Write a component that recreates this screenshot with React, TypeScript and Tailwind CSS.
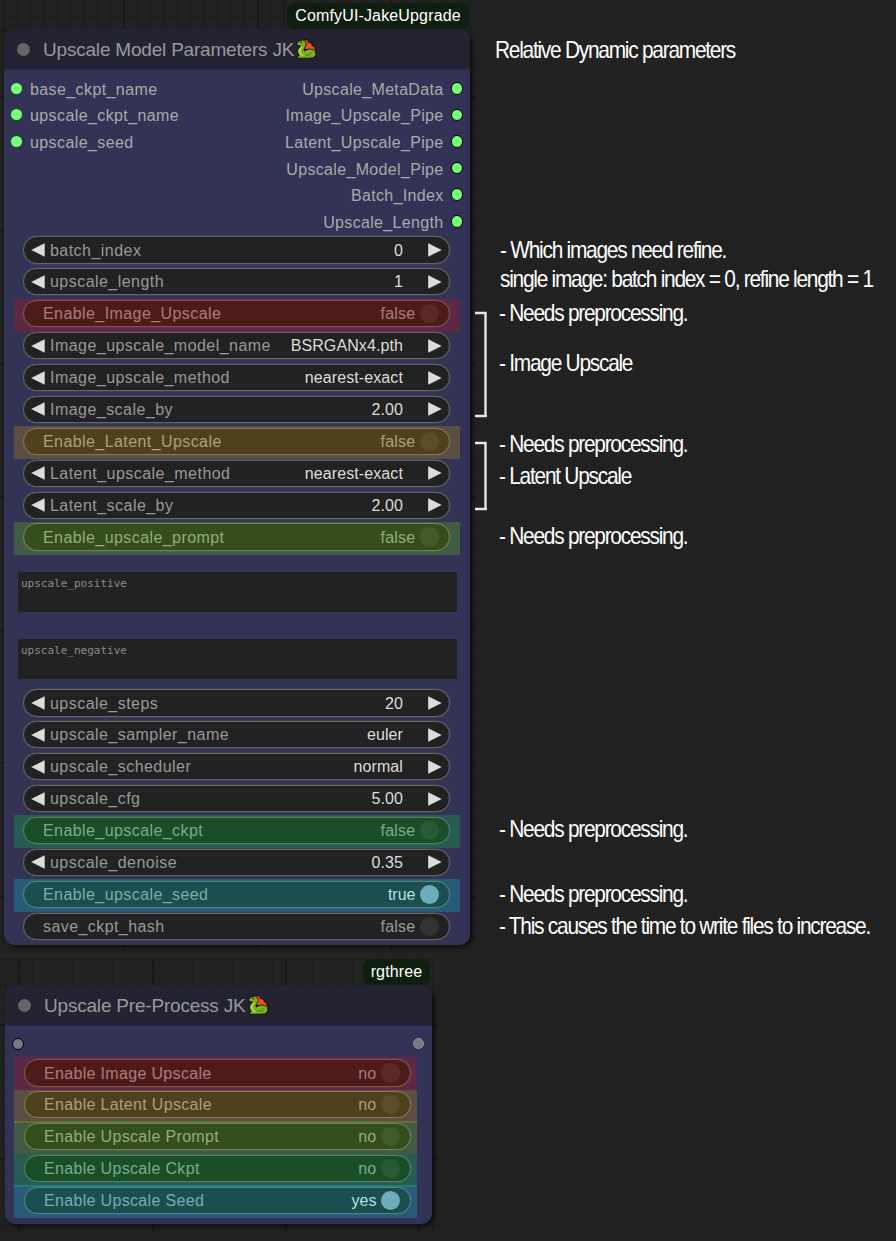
import React from "react";

type Tint = "red" | "amber" | "lime" | "green" | "cyan";

const TINTS: Record<Tint, string> = {
  red: "bg-[#ff0000]/20",
  amber: "bg-[#ffc000]/20",
  lime: "bg-[#80ff00]/20",
  green: "bg-[#00ff40]/20",
  cyan: "bg-[#00ffff]/20",
};

interface Widget {
  label: string;
  value: string;
  kind: "stepper" | "toggle";
  tint?: Tint;
  on?: boolean;
}

const TOP: Widget[] = [
  { label: "batch_index", value: "0", kind: "stepper" },
  { label: "upscale_length", value: "1", kind: "stepper" },
  { label: "Enable_Image_Upscale", value: "false", kind: "toggle", tint: "red" },
  { label: "Image_upscale_model_name", value: "BSRGANx4.pth", kind: "stepper" },
  { label: "Image_upscale_method", value: "nearest-exact", kind: "stepper" },
  { label: "Image_scale_by", value: "2.00", kind: "stepper" },
  { label: "Enable_Latent_Upscale", value: "false", kind: "toggle", tint: "amber" },
  { label: "Latent_upscale_method", value: "nearest-exact", kind: "stepper" },
  { label: "Latent_scale_by", value: "2.00", kind: "stepper" },
  { label: "Enable_upscale_prompt", value: "false", kind: "toggle", tint: "lime" },
];

const BOTTOM: Widget[] = [
  { label: "upscale_steps", value: "20", kind: "stepper" },
  { label: "upscale_sampler_name", value: "euler", kind: "stepper" },
  { label: "upscale_scheduler", value: "normal", kind: "stepper" },
  { label: "upscale_cfg", value: "5.00", kind: "stepper" },
  { label: "Enable_upscale_ckpt", value: "false", kind: "toggle", tint: "green" },
  { label: "upscale_denoise", value: "0.35", kind: "stepper" },
  { label: "Enable_upscale_seed", value: "true", kind: "toggle", tint: "cyan", on: true },
  { label: "save_ckpt_hash", value: "false", kind: "toggle" },
];

const PRE: (Widget & { band: string })[] = [
  { label: "Enable Image Upscale", value: "no", kind: "toggle", tint: "red", band: "top-[-2px] h-[33px]" },
  { label: "Enable Latent Upscale", value: "no", kind: "toggle", tint: "amber", band: "top-[-1px] h-[33px]" },
  { label: "Enable Upscale Prompt", value: "no", kind: "toggle", tint: "lime", band: "top-[-2px] h-[33px]" },
  { label: "Enable Upscale Ckpt", value: "no", kind: "toggle", tint: "green", band: "top-[-1px] h-[33px]" },
  { label: "Enable Upscale Seed", value: "yes", kind: "toggle", tint: "cyan", on: true, band: "top-[-2px] h-[33px]" },
];

const INPUTS = ["base_ckpt_name", "upscale_ckpt_name", "upscale_seed"];
const OUTPUTS = [
  "Upscale_MetaData",
  "Image_Upscale_Pipe",
  "Latent_Upscale_Pipe",
  "Upscale_Model_Pipe",
  "Batch_Index",
  "Upscale_Length",
];

function Dragon() {
  return (
    <svg className="ml-[2px] h-[20px] w-[21px] shrink-0" viewBox="0 0 20 20" preserveAspectRatio="none" strokeLinejoin="round">
      <path
        d="M6.500 1 L11 0.600 L12 3.500 L15 4 L15.500 6.800 L18 7.500 L18 10 L19.500 12 L18.500 14 L12 11 L7 10Z"
        fill="#f4511e"
        stroke="#111"
        strokeWidth="1"
      />
      <path
        d="M0.800 4.500 L2.500 2 L5 1.800 L6.500 0.800 L9 2.500 L9.800 5.500 L8.500 8.500 L7.500 10.500 L8 12 L10 10.800 L13 9.800 L16.500 10.800 L18.800 13 L18.800 16.500 L16.500 18.800 L12 19.200 L2 19.200 L0.900 18 L3 16.500 L1.500 13.500 L1.500 10.500 L4.500 7 L1.200 6.500Z"
        fill="#78b321"
        stroke="#111"
        strokeWidth="0.900"
      />
      <path d="M5.800 7.500 Q2.600 11 3.800 13.500 Q4.800 16 7 17" fill="none" stroke="#cddc39" strokeWidth="1.500" />
      <path d="M9 15.500 Q11 17 13 15.800 Q15 14.500 13.800 12.800" fill="none" stroke="#3f7312" strokeWidth="0.900" />
      <circle cx="5" cy="3.700" r="0.700" fill="#111" />
    </svg>
  );
}

function Row({ w, wide, band }: { w: Widget; wide: boolean; band?: string }) {
  return (
    <div className="relative h-[31.94px]">
      <div
        className={`flex h-[27.500px] items-center rounded-full border border-[#666] bg-[#222] text-base leading-none shadow-[0_0_0_0.500px_rgba(102,102,102,0.45)] ${
          wide ? "ml-[19px] w-[427px]" : "ml-[19px] w-[387px]"
        }`}
      >
        {w.kind === "stepper" ? (
          <>
            <svg className="ml-[7px] h-[14px] w-[14px]" viewBox="0 0 14 14">
              <path d="M0.200 7 L13.700 0.300 V13.700Z" fill="#ddd" />
            </svg>
            <span className="ml-[5px] pt-[1.500px] tracking-[0.460px] text-[#999]">{w.label}</span>
            <span className="ml-auto pt-[1.500px] tracking-[0.100px] text-[#ddd]">{w.value}</span>
            <svg className="mr-[7px] ml-[25px] h-[14px] w-[14px]" viewBox="0 0 14 14">
              <path d="M13.700 7 L0.200 0.300 V13.700Z" fill="#ddd" />
            </svg>
          </>
        ) : (
          <>
            <span
              className={`ml-[19px] pt-[1.500px] text-[#999] ${wide ? "tracking-[0.420px]" : "tracking-[0.330px]"}`}
            >
              {w.label}
            </span>
            <span className={`ml-auto pt-[1.500px] ${w.on ? "text-[#ddd]" : "tracking-[0.250px] text-[#999]"}`}>
              {w.value}
            </span>
            <span className={`mr-[10px] ml-[4px] size-[19.500px] rounded-full ${w.on ? "bg-[#8899aa]" : "bg-[#333]"}`} />
          </>
        )}
      </div>
      {w.tint && (
        <div
          className={`absolute ${wide ? "left-[10px] w-[446px]" : "left-[9px] w-[403px]"} ${
            band ?? "top-[-1.300px] h-[33px]"
          } ${TINTS[w.tint]}`}
        />
      )}
    </div>
  );
}

function Note({ text, pos }: { text: string; pos: string }) {
  return (
    <p
      className={`absolute origin-left scale-x-[0.87] text-2xl leading-[28px] tracking-[-1.440px] whitespace-nowrap text-white ${pos}`}
    >
      {text}
    </p>
  );
}

const GRID =
  "bg-[repeating-linear-gradient(90deg,#191919_0_2px,transparent_2px_133.3px),repeating-linear-gradient(0deg,#191919_0_2px,transparent_2px_133.3px),repeating-linear-gradient(90deg,#1c1c1c_0_1px,transparent_1px_13.33px),repeating-linear-gradient(0deg,#1c1c1c_0_1px,transparent_1px_13.33px)]";

export default function App() {
  return (
    <div className="relative h-[1241px] w-[896px] overflow-hidden bg-[#222] font-['Liberation_Sans',Arial,sans-serif]">
      <div className="absolute top-0 left-0 h-[950px] w-[475px] overflow-hidden">
        <div className={`absolute top-[-35px] left-[-10px] h-[1066px] w-[485px] ${GRID}`} />
      </div>
      <div className="absolute top-[958px] left-0 h-[273px] w-[437px] overflow-hidden">
        <div className={`absolute top-[-65px] left-[-115px] h-[400px] w-[552px] ${GRID}`} />
      </div>

      <main className="relative flex flex-col items-start">
        <div className="mt-[3px] ml-[287px] h-[26px] w-[182px] rounded-[7px] bg-[#0f1f0f] text-center text-base leading-[25px] tracking-[0.150px] text-white">
          ComfyUI-JakeUpgrade
        </div>

        <section className="ml-[4px] h-[916px] w-[466px] overflow-hidden rounded-[11px] bg-[#333355] shadow-[3px_3px_4px_rgba(0,0,0,0.5)]">
          <header className="flex h-[41px] items-center border-b border-[#2a2a42] bg-[#232333]">
            <span className="ml-[13px] size-[13px] rounded-full bg-[#666]" />
            <h1 className="ml-[13px] text-[19px] leading-none tracking-[-0.200px] text-[#999]">
              Upscale Model Parameters JK
            </h1>
            <Dragon />
          </header>
          <div className="flex h-[166px] justify-between pt-[5px] text-base text-[#aaa]">
            <ul className="ml-[7px] tracking-[0.400px]">
              {INPUTS.map((s) => (
                <li key={s} className="flex h-[26.600px] items-center">
                  <span className="mr-[8px] size-[11px] rounded-full bg-[#77ff77]" />
                  <span className="pt-[3px]">{s}</span>
                </li>
              ))}
            </ul>
            <ul className="mr-[7px] tracking-[0.330px]">
              {OUTPUTS.map((s) => (
                <li key={s} className="flex h-[26.600px] items-center justify-end">
                  <span className="pt-[3px]">{s}</span>
                  <span className="ml-[7px] size-[12.500px] rounded-full border border-black bg-[#77ff77]" />
                </li>
              ))}
            </ul>
          </div>
          <div className="h-[336px]">
            {TOP.map((w) => (
              <Row key={w.label} w={w} wide />
            ))}
          </div>
          <div className="ml-[14px] h-[40px] w-[439px] bg-[#222] pt-[4px] pl-[3px] font-['DejaVu_Sans_Mono',monospace] text-[11px] leading-[16px] text-[#8c8c8c]">
            upscale_positive
          </div>
          <div className="mt-[27px] mb-[10px] ml-[14px] h-[40px] w-[439px] bg-[#222] pt-[4px] pl-[3px] font-['DejaVu_Sans_Mono',monospace] text-[11px] leading-[16px] text-[#8c8c8c]">
            upscale_negative
          </div>
          {BOTTOM.map((w) => (
            <Row key={w.label} w={w} wide />
          ))}
        </section>

        <div className="mt-[14px] ml-[363px] h-[26px] w-[67px] rounded-[7px] bg-[#0f1f0f] text-center text-base leading-[25px] tracking-[0.150px] text-white">
          rgthree
        </div>
        <section className="ml-[5px] h-[239px] w-[427px] overflow-hidden rounded-[11px] bg-[#333355] shadow-[3px_3px_4px_rgba(0,0,0,0.5)]">
          <header className="flex h-[41px] items-center border-b border-[#2a2a42] bg-[#232333]">
            <span className="ml-[13px] size-[13px] rounded-full bg-[#666]" />
            <h2 className="ml-[13px] text-[19px] leading-none tracking-[-0.200px] text-[#999]">
              Upscale Pre-Process JK
            </h2>
            <Dragon />
          </header>
          <div className="flex h-[33px] items-center justify-between pt-[2px] pr-[8px] pl-[7px]">
            <span className="size-[12px] rounded-full border-[1.500px] border-black bg-[#777788]" />
            <span className="size-[11px] rounded-full border border-[#77aa88] bg-[#777788]" />
          </div>
          {PRE.map((w) => (
            <Row key={w.label} w={w} wide={false} band={w.band} />
          ))}
        </section>
      </main>

      <svg className="absolute top-[310px] left-[474px] h-[202px] w-[15px]" viewBox="0 0 15 202" fill="none" stroke="#e6e6e6" strokeWidth="2.400">
        <path d="M1 3 H11.500 V106 M1 106 H13" />
        <path d="M1 133 H11.500 V199 M1 199 H13" />
      </svg>

      <Note text="Relative Dynamic parameters" pos="top-[36px] left-[495px]" />
      <Note text="- Which images need refine." pos="top-[236px] left-[500px]" />
      <Note text="single image: batch index = 0, refine length = 1" pos="top-[265px] left-[500px]" />
      <Note text="- Needs preprocessing." pos="top-[299px] left-[499px]" />
      <Note text="- Image Upscale" pos="top-[349px] left-[499px]" />
      <Note text="- Needs preprocessing." pos="top-[430px] left-[499px]" />
      <Note text="- Latent Upscale" pos="top-[462px] left-[499px]" />
      <Note text="- Needs preprocessing." pos="top-[522px] left-[499px]" />
      <Note text="- Needs preprocessing." pos="top-[815px] left-[499px]" />
      <Note text="- Needs preprocessing." pos="top-[880px] left-[499px]" />
      <Note text="- This causes the time to write files to increase." pos="top-[912px] left-[499px]" />
    </div>
  );
}
